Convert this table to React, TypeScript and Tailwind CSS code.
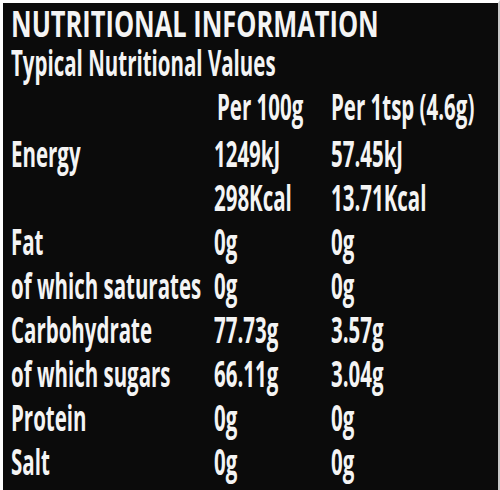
const rows = [
  { label: 'Energy', per100: '1249kJ', perTsp: '57.45kJ' },
  { label: '', per100: '298Kcal', perTsp: '13.71Kcal' },
  { label: 'Fat', per100: '0g', perTsp: '0g' },
  { label: 'of which saturates', per100: '0g', perTsp: '0g' },
  { label: 'Carbohydrate', per100: '77.73g', perTsp: '3.57g' },
  { label: 'of which sugars', per100: '66.11g', perTsp: '3.04g' },
  { label: 'Protein', per100: '0g', perTsp: '0g' },
  { label: 'Salt', per100: '0g', perTsp: '0g' },
]

// condensed look: Open Sans squeezed horizontally
function T({ children }: { children: React.ReactNode }) {
  return <span className="inline-block origin-left scale-x-[0.585] whitespace-nowrap">{children}</span>
}

export default function App() {
  return (
    <div
      className="w-[500px] h-[490px] overflow-hidden bg-[#0b0b0b] border-l-[3px] border-t-[3px] border-r-2 border-l-white border-t-white border-r-[#c8c8c8] text-[#f4f4f4] text-[35px] leading-none font-bold"
      style={{ fontFamily: '"Open Sans", "Liberation Sans", sans-serif' }}
    >
      <div className="pl-2 pt-[3px]">
        <div className="h-[39px]">
          <span className="inline-block origin-left scale-x-[0.726] whitespace-nowrap">NUTRITIONAL INFORMATION</span>
        </div>
        <div className="h-[44px]">
          <T>Typical Nutritional Values</T>
        </div>
        <div className="grid grid-cols-[203px_117px_1fr] h-[47px]">
          <div />
          <div className="pl-[3px]"><T>Per 100g</T></div>
          <div><T>Per 1tsp (4.6g)</T></div>
        </div>
        {rows.map((r, i) => (
          <div key={i} className="grid grid-cols-[203px_117px_1fr] h-[44px]">
            <div><T>{r.label}</T></div>
            <div><T>{r.per100}</T></div>
            <div><T>{r.perTsp}</T></div>
          </div>
        ))}
      </div>
    </div>
  )
}
